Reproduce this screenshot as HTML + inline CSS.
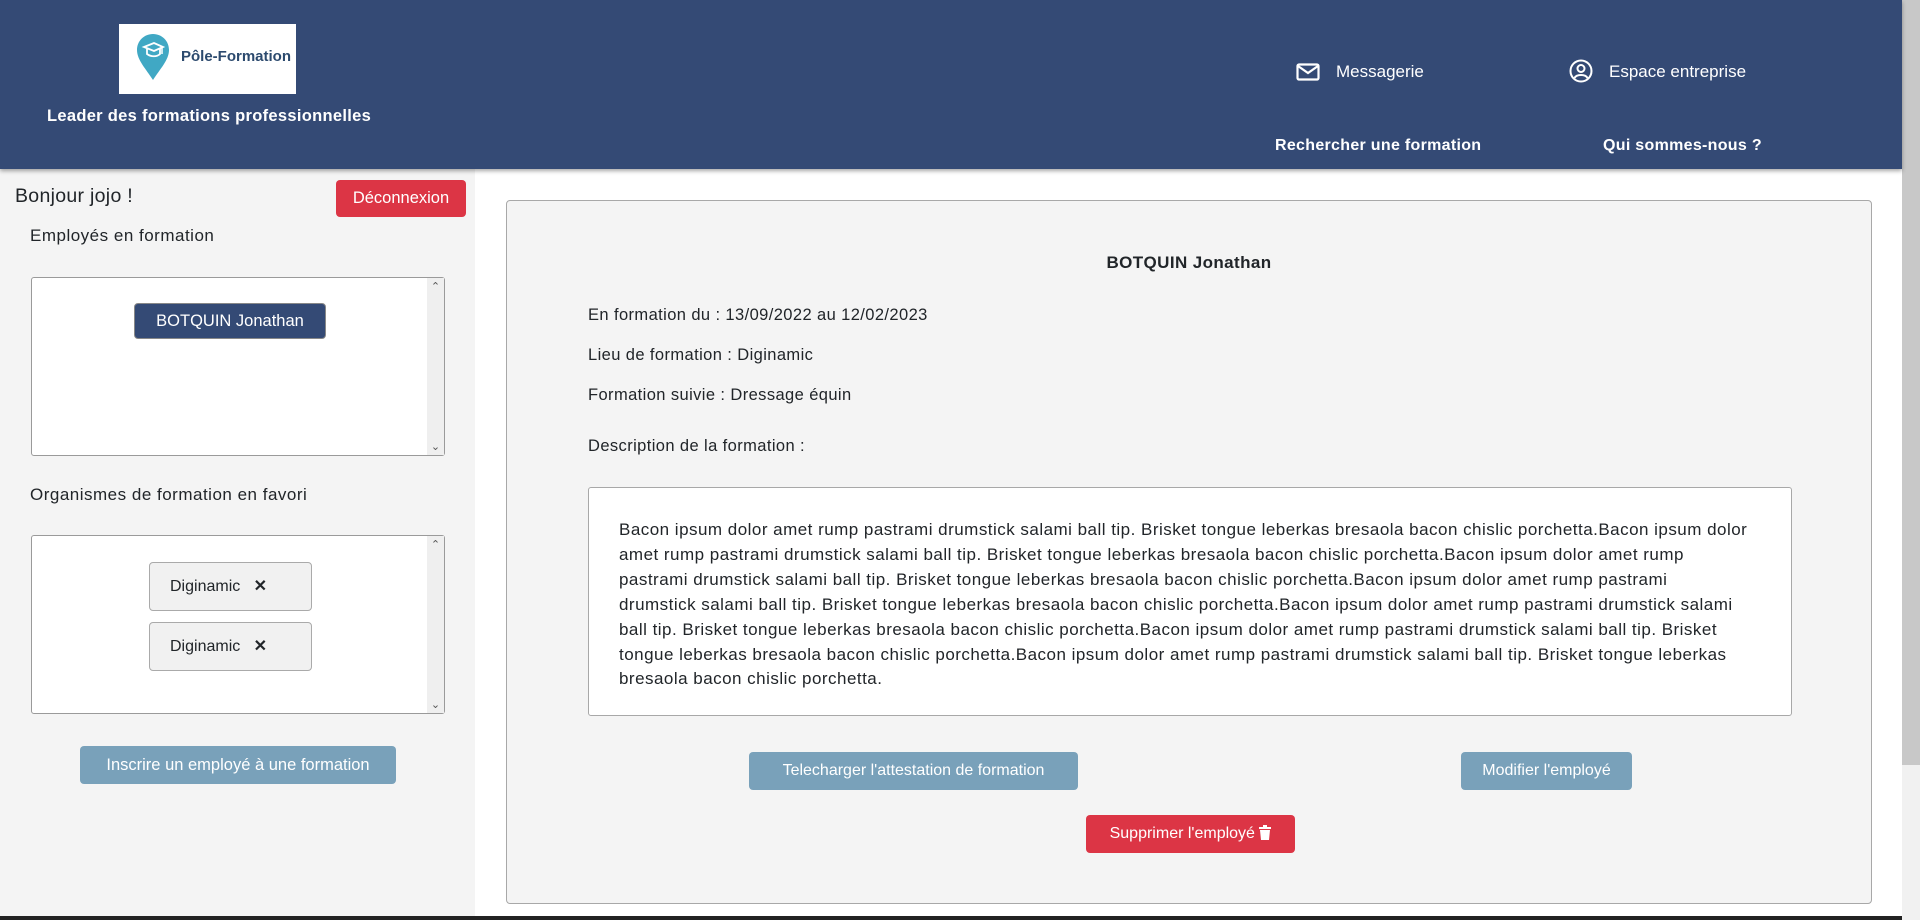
<!DOCTYPE html>
<html><head><meta charset="utf-8"><style>
*{box-sizing:border-box;margin:0;padding:0}
body{width:1920px;height:920px;overflow:hidden;background:#fff;font-family:"Liberation Sans",Arial,sans-serif;color:#212529;position:relative}
.abs{position:absolute}
header{position:absolute;left:0;top:0;width:1902px;height:169px;background:#344a75;box-shadow:0 2px 4px rgba(0,0,0,.35);z-index:2}
.nav{color:#fff;font-size:17px;position:absolute}
.navb{color:#fff;font-size:16px;font-weight:bold;position:absolute;letter-spacing:.3px}
.side{position:absolute;left:0;top:169px;width:475px;height:747px;background:#f4f4f4}
.btn{position:absolute;color:#fff;border-radius:4px;text-align:center;font-size:16px}
.box{position:absolute;left:31px;width:414px;background:#fff;border:1px solid #9a9a9a;border-radius:3px}
.sb{position:absolute;right:0;top:0;bottom:0;width:17px;background:#efefef;font-size:11px;color:#555;text-align:center}
.chip{position:absolute;left:117px;width:163px;height:49px;background:#f1f1f1;border:1px solid #aaa;border-radius:4px;font-size:16px;line-height:47px;padding-left:20px}
.card{position:absolute;left:506px;top:200px;width:1366px;height:704px;background:#f4f4f4;border:1px solid #a8a8a8;border-radius:4px}
.l{position:absolute;left:81px;font-size:16.5px;letter-spacing:.4px}
.lab{position:absolute;left:30px;font-size:17px;letter-spacing:.5px}
.desc{position:absolute;left:81px;top:286px;width:1204px;height:229px;background:#fff;border:1px solid #a8a8a8;border-radius:3px;padding:30px 0 0 30px;font-size:17px;line-height:24.9px;white-space:nowrap;letter-spacing:.48px}
</style></head><body>
<header>
<div class="abs" style="left:119px;top:24px;width:177px;height:70px;background:#fff">
<svg class="abs" style="left:17px;top:9px" width="34" height="48" viewBox="0 0 34 48"><path d="M17 1C8 1 1 8 1 17c0 10 9 19 16 30 7-11 16-20 16-30C33 8 26 1 17 1z" fill="#40a8c4"/><path d="M8 14l10-4 9 4-9 4z M11 16v5c4 3 10 3 13 0v-5" fill="none" stroke="#fff" stroke-width="1.8"/><path d="M26 14v7" stroke="#fff" stroke-width="1.5"/></svg>
<div class="abs" style="left:62px;top:24px;font-size:15px;font-weight:bold;color:#2c4a6e">Pôle-Formation</div>
</div>
<div class="navb" style="left:47px;top:107px;font-size:16.5px">Leader des formations professionnelles</div>
<svg class="abs" style="left:1296px;top:63px" width="24" height="18" viewBox="0 0 24 18"><rect x="1.5" y="1.5" width="21" height="15" rx="1.5" fill="none" stroke="#fff" stroke-width="2.2"/><path d="M2 3l10 7 10-7" fill="none" stroke="#fff" stroke-width="2.2"/></svg>
<div class="nav" style="left:1336px;top:62px">Messagerie</div>
<svg class="abs" style="left:1569px;top:59px" width="24" height="24" viewBox="0 0 24 24"><circle cx="12" cy="12" r="10.5" fill="none" stroke="#fff" stroke-width="2"/><circle cx="12" cy="9.5" r="3.5" fill="none" stroke="#fff" stroke-width="2"/><path d="M5.5 19c2-4 11-4 13 0" fill="none" stroke="#fff" stroke-width="2"/></svg>
<div class="nav" style="left:1609px;top:62px">Espace entreprise</div>
<div class="navb" style="left:1275px;top:137px">Rechercher une formation</div>
<div class="navb" style="left:1603px;top:137px">Qui sommes-nous ?</div>
</header>
<div class="abs" style="left:1902px;top:0;width:18px;height:920px;background:#f1f1f1"><div style="width:18px;height:765px;background:#c8c8c8"></div></div>
<div class="side">
<div class="abs" style="left:15px;top:16px;font-size:19.5px;letter-spacing:.3px">Bonjour jojo !</div>
<div class="btn" style="left:336px;top:11px;width:130px;height:37px;background:#dc3545;line-height:37px;font-size:16.5px">Déconnexion</div>
<div class="lab" style="top:57px">Employés en formation</div>
<div class="box" style="top:108px;height:179px"><div class="sb"><div style="margin-top:2px">&#8963;</div><div style="position:absolute;bottom:2px;width:17px">&#8964;</div></div>
<div class="btn" style="left:102px;top:25px;width:192px;height:36px;background:#344a75;border:1px solid #888;line-height:34px;font-size:16.5px">BOTQUIN Jonathan</div></div>
<div class="lab" style="top:316px">Organismes de formation en favori</div>
<div class="box" style="top:366px;height:179px"><div class="sb"><div style="margin-top:2px">&#8963;</div><div style="position:absolute;bottom:2px;width:17px">&#8964;</div></div>
<div class="chip" style="top:26px">Diginamic &nbsp;&nbsp;<b>✕</b></div>
<div class="chip" style="top:86px">Diginamic &nbsp;&nbsp;<b>✕</b></div></div>
<div class="btn" style="left:80px;top:577px;width:316px;height:38px;background:#79a1ba;line-height:38px;font-size:16.5px">Inscrire un employé à une formation</div>
</div>
<div class="card">
<div class="abs" style="left:0;width:100%;top:52px;text-align:center;font-weight:bold;font-size:17px;letter-spacing:.4px">BOTQUIN Jonathan</div>
<div class="l" style="top:105px">En formation du : 13/09/2022 au 12/02/2023</div>
<div class="l" style="top:145px">Lieu de formation : Diginamic</div>
<div class="l" style="top:185px">Formation suivie : Dressage équin</div>
<div class="l" style="top:236px">Description de la formation :</div>
<div class="desc">Bacon ipsum dolor amet rump pastrami drumstick salami ball tip. Brisket tongue leberkas bresaola bacon chislic porchetta.Bacon ipsum dolor<br>amet rump pastrami drumstick salami ball tip. Brisket tongue leberkas bresaola bacon chislic porchetta.Bacon ipsum dolor amet rump<br>pastrami drumstick salami ball tip. Brisket tongue leberkas bresaola bacon chislic porchetta.Bacon ipsum dolor amet rump pastrami<br>drumstick salami ball tip. Brisket tongue leberkas bresaola bacon chislic porchetta.Bacon ipsum dolor amet rump pastrami drumstick salami<br>ball tip. Brisket tongue leberkas bresaola bacon chislic porchetta.Bacon ipsum dolor amet rump pastrami drumstick salami ball tip. Brisket<br>tongue leberkas bresaola bacon chislic porchetta.Bacon ipsum dolor amet rump pastrami drumstick salami ball tip. Brisket tongue leberkas<br>bresaola bacon chislic porchetta.</div>
<div class="btn" style="left:242px;top:551px;width:329px;height:38px;background:#79a1ba;line-height:38px">Telecharger l'attestation de formation</div>
<div class="btn" style="left:954px;top:551px;width:171px;height:38px;background:#79a1ba;line-height:38px">Modifier l'employé</div>
<div class="btn" style="left:579px;top:614px;width:209px;height:38px;background:#dc3545;line-height:38px">Supprimer l'employé <svg width="12" height="15" viewBox="0 0 12 15" style="vertical-align:-2px"><path d="M0 2h12v2H0z M4 0h4v2H4z M1 5h10l-1 10H2z" fill="#fff"/></svg></div>
</div>
<div class="abs" style="left:0;top:916px;width:1902px;height:4px;background:#222"></div>
</body></html>
